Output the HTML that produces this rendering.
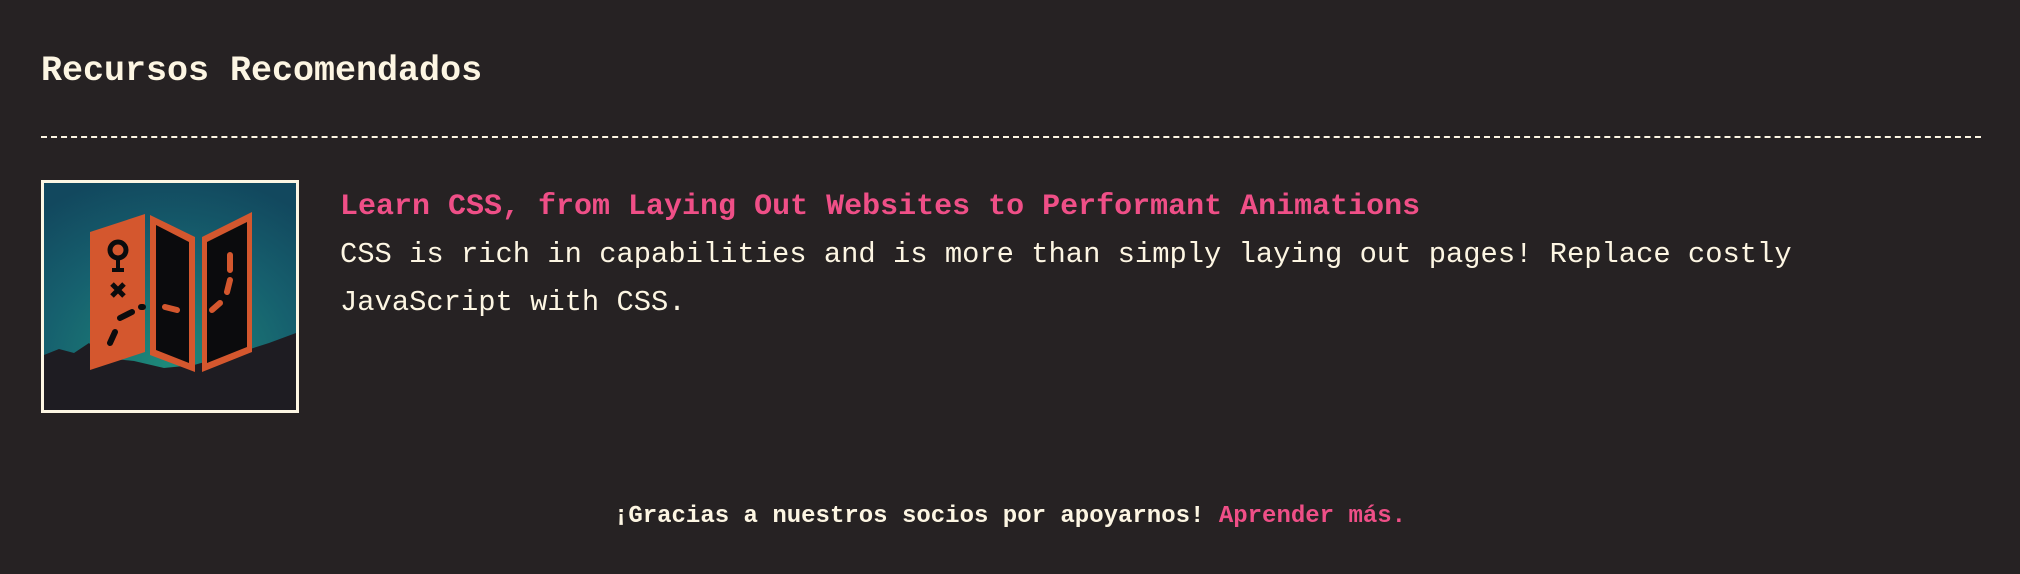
<!DOCTYPE html>
<html><head><meta charset="utf-8"><style>
html,body{margin:0;padding:0;background:#262223;width:2020px;height:574px;overflow:hidden}
body{font-family:"Liberation Mono",monospace;color:#fdf6e3;position:relative}
h2{position:absolute;left:41px;top:46px;margin:0;font-size:35px;font-weight:bold;line-height:50px;white-space:nowrap}
.rule{position:absolute;left:41px;top:136px;width:1940px;border-top:2px dashed #fdf6e3}
.thumb{position:absolute;left:41px;top:180px;width:252px;height:227px;border:3px solid #fdf6e3;overflow:hidden}
.title{position:absolute;left:340px;top:187px;font-size:30px;font-weight:bold;color:#ef4f87;white-space:nowrap;line-height:40px}
.desc{position:absolute;left:340px;top:231px;font-size:28.8px;line-height:48px;width:1560px}
.foot{position:absolute;left:0;width:2020px;text-align:center;top:500px;font-size:24px;font-weight:bold;line-height:34px;white-space:nowrap}
.foot span{color:#ef4f87}
</style></head><body>
<h2>Recursos Recomendados</h2>
<div class="rule"></div>
<div class="thumb">
<svg width="252" height="227" viewBox="0 0 252 227">
<defs><radialGradient id="g" cx="0.5" cy="0.8" r="0.85"><stop offset="0" stop-color="#1e8a7a"/><stop offset="0.6" stop-color="#16606e"/><stop offset="1" stop-color="#12485e"/></radialGradient></defs>
<rect width="252" height="227" fill="url(#g)"/>
<path d="M0 172 L15 166 L30 170 L45 160 L60 175 L90 178 L120 185 L150 182 L175 175 L200 168 L225 160 L252 150 L252 227 L0 227Z" fill="#1e1c22"/>
<path d="M46 49 L101 31 L101 169 L46 187Z" fill="#d4572e"/>
<path d="M106 32 L151 54 L151 189 L106 172Z" fill="#d4572e"/>
<path d="M112 42 L145 59 L145 180 L112 167Z" fill="#0b0b0d"/>
<path d="M158 54 L208 29 L208 169 L158 189Z" fill="#d4572e"/>
<path d="M163 59 L203 39 L203 164 L163 180Z" fill="#0b0b0d"/>
<circle cx="74" cy="67" r="8" fill="none" stroke="#0b0b0d" stroke-width="5"/>
<path d="M74 75 V87 M68 87 H80" stroke="#0b0b0d" stroke-width="4"/>
<path d="M68 101 L80 113 M80 101 L68 113" stroke="#0b0b0d" stroke-width="5"/>
<path d="M66 160 L71 149 M76 135 L88 129 M97 124 L99 124" stroke="#0b0b0d" stroke-width="6" stroke-linecap="round"/>
<path d="M121 124 L133 127 M168 127 L176 120 M183 109 L186 97 M186 87 L186 72" stroke="#d4572e" stroke-width="6" stroke-linecap="round"/>
</svg></div>
<div class="title">Learn CSS, from Laying Out Websites to Performant Animations</div>
<div class="desc">CSS is rich in capabilities and is more than simply laying out pages! Replace costly JavaScript with CSS.</div>
<div class="foot">¡Gracias a nuestros socios por apoyarnos! <span>Aprender más.</span></div>
</body></html>
